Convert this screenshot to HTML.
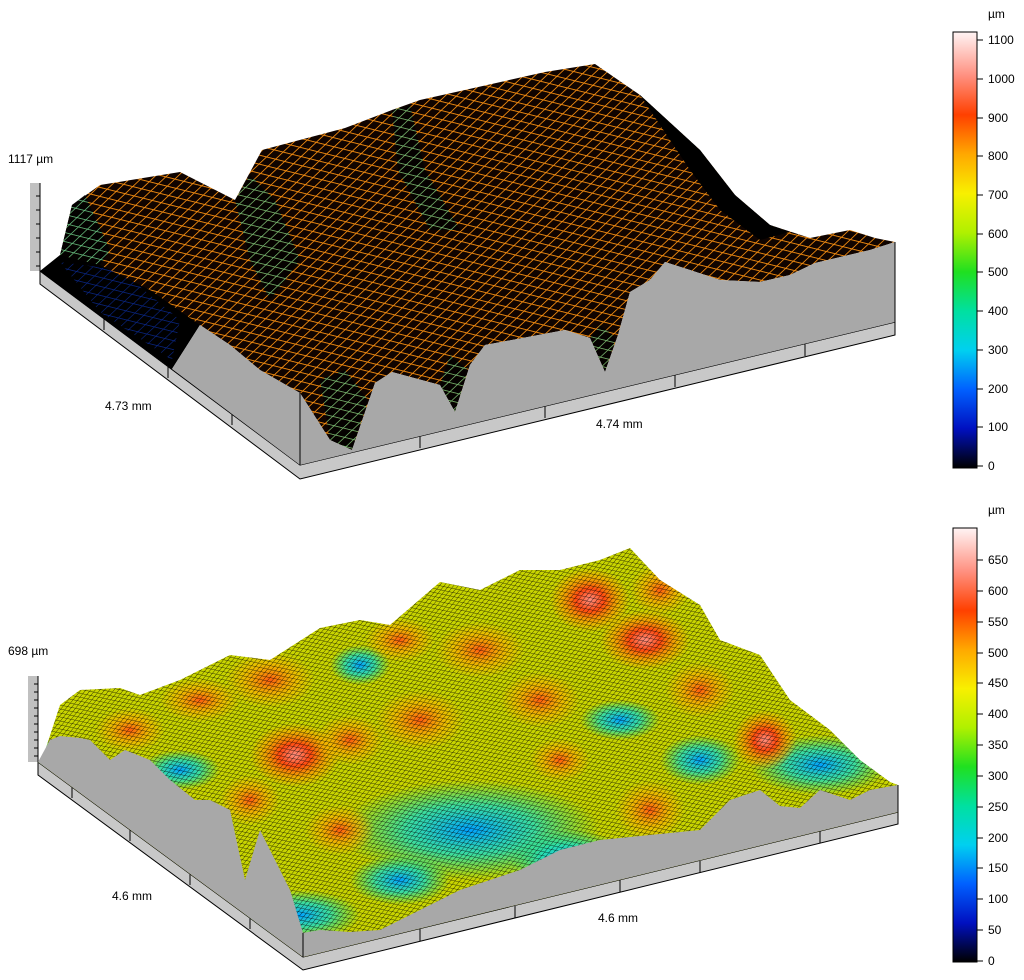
<!DOCTYPE html>
<html><head><meta charset="utf-8"><style>
html,body{margin:0;padding:0;background:#fff;width:1024px;height:980px;overflow:hidden}
svg{display:block}
text{font-family:"Liberation Sans",sans-serif;font-size:12px;fill:#000}
</style></head><body>
<svg width="1024" height="980" viewBox="0 0 1024 980">
<defs>
<linearGradient id="cb" x1="0" y1="1" x2="0" y2="0">
<stop offset="0" stop-color="#000"/>
<stop offset="0.09" stop-color="#0010c0"/>
<stop offset="0.18" stop-color="#0060ff"/>
<stop offset="0.27" stop-color="#00d0f0"/>
<stop offset="0.36" stop-color="#00e0a0"/>
<stop offset="0.45" stop-color="#20e020"/>
<stop offset="0.54" stop-color="#b0f000"/>
<stop offset="0.63" stop-color="#f8f000"/>
<stop offset="0.72" stop-color="#ffa800"/>
<stop offset="0.81" stop-color="#ff4000"/>
<stop offset="0.90" stop-color="#ff9080"/>
<stop offset="1" stop-color="#fff4f4"/>
</linearGradient>
<pattern id="meshT" width="9" height="9" patternUnits="userSpaceOnUse" patternTransform="skewY(14) skewX(-40)">
<rect width="9" height="9" fill="#100400"/>
<path d="M0 0H9M0 0V9" stroke="#f08a10" stroke-width="2" fill="none"/>
</pattern>
<pattern id="meshC" width="9" height="9" patternUnits="userSpaceOnUse" patternTransform="skewY(14) skewX(-40)">
<rect width="9" height="9" fill="#000"/>
<path d="M0 0H9M0 0V9" stroke="#40d0a0" stroke-width="1.6" fill="none"/>
</pattern>
<pattern id="meshBl" width="9" height="9" patternUnits="userSpaceOnUse" patternTransform="skewY(14) skewX(-40)">
<rect width="9" height="9" fill="#000"/>
<path d="M0 0H9M0 0V9" stroke="#1040e0" stroke-width="1.4" fill="none"/>
</pattern>
<pattern id="meshB" width="4" height="4" patternUnits="userSpaceOnUse" patternTransform="skewY(12) skewX(-35)">
<path d="M0 0H4M0 0V4" stroke="#000" stroke-width="0.9" fill="none" opacity="0.8"/>
</pattern>
<radialGradient id="pk" cx="0.5" cy="0.5" r="0.5">
<stop offset="0" stop-color="#ff9080"/><stop offset="0.35" stop-color="#ff4a10"/><stop offset="0.75" stop-color="#ffa000" stop-opacity="0.6"/><stop offset="1" stop-color="#ffa000" stop-opacity="0"/>
</radialGradient>
<radialGradient id="pk2" cx="0.5" cy="0.5" r="0.5">
<stop offset="0" stop-color="#ff5a10"/><stop offset="0.6" stop-color="#ffb000" stop-opacity="0.6"/><stop offset="1" stop-color="#ffb000" stop-opacity="0"/>
</radialGradient>
<radialGradient id="vl" cx="0.5" cy="0.5" r="0.5">
<stop offset="0" stop-color="#00a0ff"/><stop offset="0.5" stop-color="#00e0e0" stop-opacity="0.7"/><stop offset="1" stop-color="#00e0a0" stop-opacity="0"/>
</radialGradient>
<clipPath id="bclip"><polygon points="38,762 42,760 60,705 80,690 120,688 140,695 180,680 230,655 270,660 320,628 360,620 390,625 440,582 480,590 520,570 560,570 600,560 630,548 660,580 700,605 720,640 760,655 790,700 830,730 860,760 890,782 898,785 898,812 303,957"/></clipPath>
</defs>

<!-- ===== TOP PLOT ===== -->
<text x="8" y="163">1117 µm</text>
<rect x="30" y="183" width="10" height="88" fill="#c0c0c0"/>
<path d="M40 183V271" stroke="#000"/>
<g stroke="#000"><path d="M36 196h4M36 210h4M36 224h4M36 238h4M36 252h4M36 266h4"/></g>
<polygon points="40,271 300,465 895,322 895,335 300,479 40,284" fill="#c8c8c8" stroke="#000" stroke-width="1"/>
<polyline points="40,271 300,465 895,322" fill="none" stroke="#000"/>
<g stroke="#000"><path d="M104,318v12M168,366v12M232,413v12M420,436v12M545,406v12M675,375v12M805,344v12"/></g>
<!-- black floor region left -->
<polygon points="40,271 60,255 100,250 200,300 200,325 172,369" fill="#000"/>
<polygon points="60,262 120,270 180,320 172,360 100,312" fill="url(#meshBl)" opacity="0.6"/>
<!-- surface -->
<polygon points="60,255 72,205 100,185 180,172 235,200 262,150 345,128 392,110 420,100 545,72 595,64 640,95 700,150 735,195 770,225 810,238 850,230 875,238 895,242 870,250 815,263 790,275 760,282 720,280 690,270 665,262 650,280 630,292 618,335 605,372 590,338 565,330 485,345 470,365 455,412 440,385 392,372 375,383 352,450 330,440 300,393 260,370 230,345 200,325 150,290 100,265" fill="url(#meshT)"/>
<polygon points="60,255 72,205 85,195 110,250 100,265" fill="url(#meshC)" opacity="0.8"/>
<polygon points="235,200 250,175 275,200 300,260 270,300 250,260" fill="url(#meshC)" opacity="0.7"/>
<polygon points="392,110 410,105 425,170 460,230 430,230 398,170" fill="url(#meshC)" opacity="0.7"/>
<polygon points="330,440 352,450 368,400 345,370 320,380" fill="url(#meshC)" opacity="0.7"/>
<polygon points="440,385 455,412 468,370 450,355" fill="url(#meshC)" opacity="0.7"/>
<polygon points="590,338 605,372 616,338 600,325" fill="url(#meshC)" opacity="0.7"/>
<polygon points="640,95 700,150 735,195 770,225 790,232 760,240 720,210 690,170" fill="#000"/>
<!-- gray walls -->
<polygon points="300,393 330,440 352,450 375,383 392,372 440,385 455,412 470,365 485,345 565,330 590,338 605,372 618,335 630,292 650,280 665,262 690,270 720,280 760,282 790,275 815,263 870,250 895,242 895,322 300,465" fill="#a8a8a8"/>
<polygon points="172,369 200,325 230,345 260,370 300,393 300,465" fill="#a8a8a8"/>
<path d="M300 393V465M895 242V322" stroke="#000"/>
<text x="105" y="410">4.73 mm</text>
<text x="596" y="428">4.74 mm</text>

<rect x="953" y="32" width="24" height="436" fill="url(#cb)" stroke="#000"/>
<text x="988" y="18">µm</text>
<g stroke="#000">
<path d="M977 466h6M977 427h6M977 389h6M977 350h6M977 311h6M977 272h6M977 234h6M977 195h6M977 156h6M977 118h6M977 79h6M977 40h6"/>
</g>
<g>
<text x="988" y="470">0</text><text x="988" y="431">100</text><text x="988" y="393">200</text><text x="988" y="354">300</text><text x="988" y="315">400</text><text x="988" y="276">500</text><text x="988" y="238">600</text><text x="988" y="199">700</text><text x="988" y="160">800</text><text x="988" y="122">900</text><text x="988" y="83">1000</text><text x="988" y="44">1100</text>
</g>

<!-- ===== BOTTOM PLOT ===== -->
<text x="8" y="655">698 µm</text>
<rect x="28" y="676" width="10" height="86" fill="#c0c0c0"/>
<path d="M38 676V762" stroke="#000"/>
<g stroke="#000"><path d="M34 684h4M34 692h4M34 700h4M34 708h4M34 716h4M34 724h4M34 732h4M34 740h4M34 748h4M34 756h4"/></g>
<polygon points="38,762 303,957 898,812 898,824 303,970 38,775" fill="#c8c8c8" stroke="#000"/>
<polyline points="38,762 303,957 898,812" fill="none" stroke="#000"/>
<g stroke="#000"><path d="M72,786v12M130,829v12M190,873v12M250,917v12M420,929v12M515,906v12M620,880v12M700,861v12M820,831v12"/></g>
<g clip-path="url(#bclip)">
<rect x="30" y="540" width="880" height="430" fill="#c8d400"/>
<ellipse cx="470" cy="830" rx="130" ry="50" fill="url(#vl)"/>
<ellipse cx="820" cy="765" rx="70" ry="30" fill="url(#vl)"/>
<ellipse cx="300" cy="915" rx="60" ry="25" fill="url(#vl)"/>
<ellipse cx="570" cy="860" rx="60" ry="30" fill="url(#vl)"/>
<ellipse cx="400" cy="880" rx="50" ry="25" fill="url(#vl)"/>
<ellipse cx="700" cy="760" rx="40" ry="25" fill="url(#vl)"/>
<ellipse cx="180" cy="770" rx="40" ry="20" fill="url(#vl)"/>
<ellipse cx="360" cy="665" rx="30" ry="20" fill="url(#vl)"/>
<ellipse cx="620" cy="720" rx="40" ry="20" fill="url(#vl)"/>
<ellipse cx="50" cy="755" rx="20" ry="15" fill="url(#vl)"/>
<ellipse cx="590" cy="600" rx="40" ry="32" fill="url(#pk)"/>
<ellipse cx="645" cy="640" rx="45" ry="30" fill="url(#pk)"/>
<ellipse cx="295" cy="755" rx="45" ry="32" fill="url(#pk)"/>
<ellipse cx="765" cy="740" rx="32" ry="30" fill="url(#pk)"/>
<ellipse cx="270" cy="680" rx="45" ry="28" fill="url(#pk2)"/>
<ellipse cx="200" cy="700" rx="40" ry="22" fill="url(#pk2)"/>
<ellipse cx="480" cy="650" rx="45" ry="28" fill="url(#pk2)"/>
<ellipse cx="400" cy="640" rx="35" ry="22" fill="url(#pk2)"/>
<ellipse cx="650" cy="810" rx="35" ry="30" fill="url(#pk2)"/>
<ellipse cx="420" cy="720" rx="45" ry="30" fill="url(#pk2)"/>
<ellipse cx="540" cy="700" rx="40" ry="28" fill="url(#pk2)"/>
<ellipse cx="700" cy="690" rx="35" ry="28" fill="url(#pk2)"/>
<ellipse cx="130" cy="730" rx="35" ry="22" fill="url(#pk2)"/>
<ellipse cx="340" cy="830" rx="35" ry="25" fill="url(#pk2)"/>
<ellipse cx="350" cy="740" rx="35" ry="25" fill="url(#pk2)"/>
<ellipse cx="560" cy="760" rx="30" ry="22" fill="url(#pk2)"/>
<ellipse cx="660" cy="590" rx="30" ry="25" fill="url(#pk2)"/>
<ellipse cx="250" cy="800" rx="30" ry="25" fill="url(#pk2)"/>
<rect x="30" y="540" width="880" height="430" fill="url(#meshB)"/>
</g>
<polygon points="303,933 320,930 350,932 380,930 400,920 440,900 460,890 490,880 520,870 560,850 600,840 650,835 700,830 730,800 745,795 760,790 780,806 800,808 820,790 850,800 870,790 898,785 898,812 303,957" fill="#a8a8a8"/>
<polygon points="38,762 50,740 60,736 80,738 90,740 110,760 125,750 150,760 170,780 195,800 210,800 230,810 245,880 260,830 290,890 303,933 303,957" fill="#a8a8a8"/>
<path d="M303 933V957M898 785V812" stroke="#000"/>
<text x="112" y="900">4.6 mm</text>
<text x="598" y="922">4.6 mm</text>

<rect x="953" y="528" width="24" height="434" fill="url(#cb)" stroke="#000"/>
<text x="988" y="514">µm</text>
<g stroke="#000">
<path d="M977 961h6M977 930h6M977 899h6M977 868h6M977 838h6M977 807h6M977 776h6M977 745h6M977 714h6M977 683h6M977 653h6M977 622h6M977 591h6M977 560h6"/>
</g>
<g>
<text x="988" y="965">0</text><text x="988" y="934">50</text><text x="988" y="903">100</text><text x="988" y="872">150</text><text x="988" y="842">200</text><text x="988" y="811">250</text><text x="988" y="780">300</text><text x="988" y="749">350</text><text x="988" y="718">400</text><text x="988" y="687">450</text><text x="988" y="657">500</text><text x="988" y="626">550</text><text x="988" y="595">600</text><text x="988" y="564">650</text>
</g>
</svg>
</body></html>
